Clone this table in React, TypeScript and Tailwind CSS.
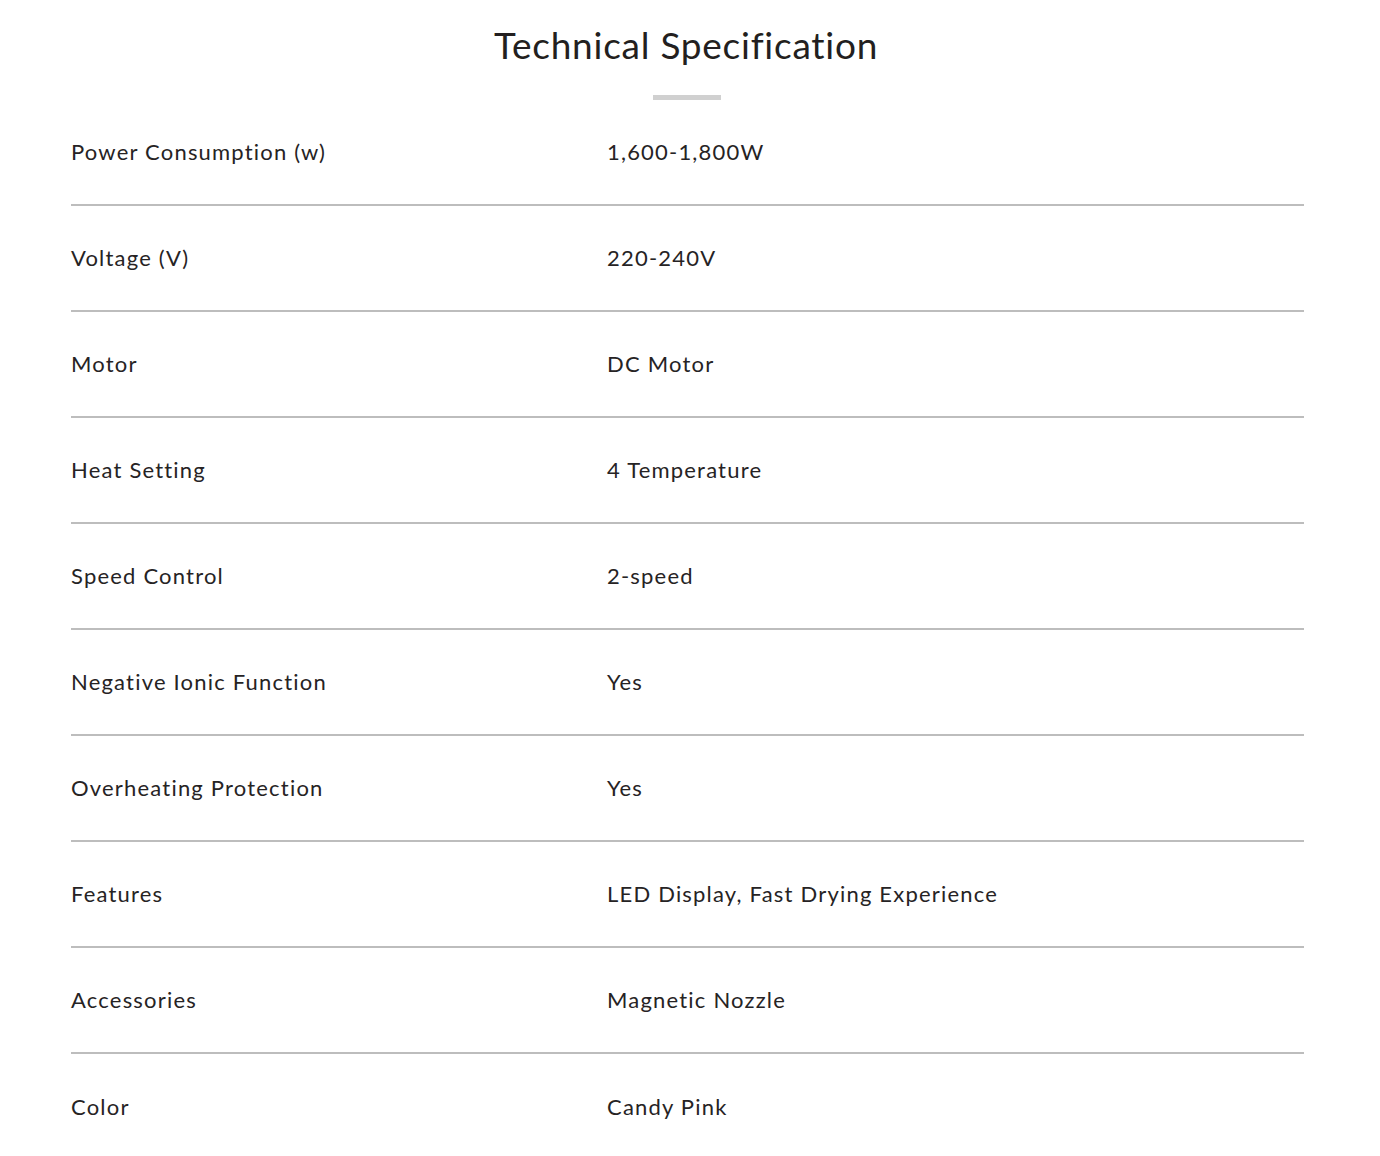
const specs: [string, string][] = [
  ['Power Consumption (w)', '1,600-1,800W'],
  ['Voltage (V)', '220-240V'],
  ['Motor', 'DC Motor'],
  ['Heat Setting', '4 Temperature'],
  ['Speed Control', '2-speed'],
  ['Negative Ionic Function', 'Yes'],
  ['Overheating Protection', 'Yes'],
  ['Features', 'LED Display, Fast Drying Experience'],
  ['Accessories', 'Magnetic Nozzle'],
  ['Color', 'Candy Pink'],
]

export default function App() {
  return (
    <div className="min-h-screen bg-white font-['Lato',sans-serif] text-[#231f20]">
      <section className="pt-[22px]">
        <h2 className="pr-[8px] text-center text-[37px] leading-[46px] tracking-[0.75px]">
          Technical Specification
        </h2>
        <div className="mx-auto mt-[27px] h-[5px] w-[68px] -translate-x-[3px] bg-[#d0d0d0]" />

        <div className="ml-[71px] w-[1233px]">
          {specs.map(([label, value], i) => (
            <div
              key={label}
              className={`flex h-[106px] items-center text-[22px] tracking-[1.2px] text-[#262324] ${i < specs.length - 1 ? 'border-b-2 border-[#bdbdbd]' : ''}`}
            >
              <div className="w-[536px] pb-[2px]">{label}</div>
              <div className="pb-[2px]">{value}</div>
            </div>
          ))}
        </div>
      </section>
    </div>
  )
}
